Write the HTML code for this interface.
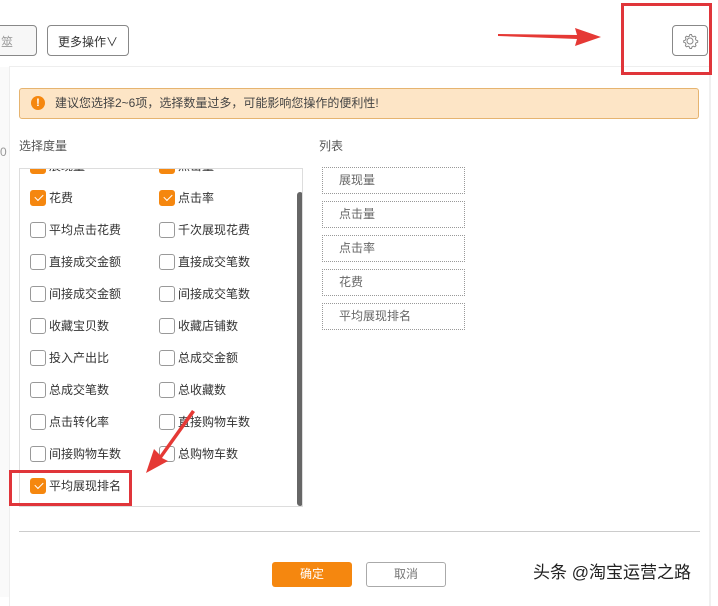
<!DOCTYPE html>
<html><head><meta charset="utf-8"><style>
*{box-sizing:border-box;margin:0;padding:0}
body{width:718px;height:594px;background:#fff;position:relative;overflow:hidden;font-family:"Liberation Sans","Noto Sans CJK SC",sans-serif;font-size:12px;color:#333}
.a{position:absolute}
.btn{position:absolute;border:1px solid #888;border-radius:4px;background:#fff}
.cb{position:absolute;width:16px;height:16px;border:1px solid #999;border-radius:3px;background:#fff}
.cb.on{background:#f5870f;border-color:#f5870f}
.cb.on::after{content:"";position:absolute;left:4px;top:3px;width:7px;height:4px;border:solid #fff;border-width:0 0 1.5px 1.5px;transform:rotate(-45deg)}
.lb{position:absolute;font-size:12px;line-height:16px;color:#333}
.li{position:absolute;left:322px;width:143px;height:27px;border:1px dotted #999;color:#666;padding-left:16px;line-height:25px}
</style></head><body>
<div class="a" style="left:0;top:67px;width:9px;height:530px;background:#fafafa"></div>
<div class="btn" style="left:-4px;top:25px;width:41px;height:31px;background:#f7f7f7"><span style="position:absolute;left:4px;top:7px;color:#999">筮</span></div>
<div class="btn" style="left:47px;top:25px;width:82px;height:31px;padding:7px 0 0 10px;font-size:12px">更多操作∨</div>
<div class="btn" style="left:672px;top:25px;width:36px;height:31px">
<svg width="34" height="29" viewBox="0 0 34 29"><circle cx="17" cy="15" r="3" fill="none" stroke="#888" stroke-width="1"/><path d="M17 8.5l1.5 0 .5 1.6 1.3.7 1.6-.6 1.1 1.1-.6 1.6.7 1.3 1.6.5v1.6l-1.6.5-.7 1.3.6 1.6-1.1 1.1-1.6-.6-1.3.7-.5 1.6h-1.6l-.5-1.6-1.3-.7-1.6.6-1.1-1.1.6-1.6-.7-1.3-1.6-.5v-1.6l1.6-.5.7-1.3-.6-1.6 1.1-1.1 1.6.6 1.3-.7.5-1.6z" fill="none" stroke="#888" stroke-width="1"/></svg></div>
<svg class="a" style="left:495px;top:25px" width="110" height="22"><polygon points="3,9 82,10 80,3 106,12 80,21 82,14 3,11" fill="#e53935"/></svg>

<div class="a" style="left:9px;top:66px;width:702px;height:540px;background:#fff;border-left:1px solid #eee;border-top:1px solid #eee;border-right:2px solid #f0f0f0"></div>
<div class="a" style="left:621px;top:3px;width:91px;height:72px;border:3px solid #e0353a;z-index:5"></div>
<div class="a" style="left:19px;top:88px;width:680px;height:31px;background:#fde5c6;border:1px solid #e6b470;border-radius:3px"></div>
<div class="a" style="left:31px;top:96px;width:14px;height:14px;border-radius:50%;background:#f5870f;color:#fff;font-size:11px;font-weight:bold;text-align:center;line-height:14px">!</div>
<div class="a" style="left:55px;top:96px;color:#444;line-height:15px">建议您选择2~6项，选择数量过多，可能影响您操作的便利性!</div>
<div class="a" style="left:19px;top:137px;color:#555">选择度量</div>
<div class="a" style="left:319px;top:137px;color:#555">列表</div>
<div class="a" style="left:0;top:145px;color:#999">0</div>

<div class="a" style="left:19px;top:168px;width:284px;height:339px;border:1px solid #ddd;overflow:hidden">
<div class="a" style="left:277px;top:23px;width:6px;height:314px;background:#666;border-radius:3px"></div>
</div>
<div class="a" style="left:20px;top:169px;width:276px;height:336px;overflow:hidden">
<div class="cb on" style="left:10px;top:-11px"></div><div class="lb" style="left:29px;top:-11px">展现量</div>
<div class="cb on" style="left:139px;top:-11px"></div><div class="lb" style="left:158px;top:-11px">点击量</div>
</div>
<div class="cb on" style="left:30px;top:190px"></div><div class="lb" style="left:49px;top:190px">花费</div>
<div class="cb on" style="left:159px;top:190px"></div><div class="lb" style="left:178px;top:190px">点击率</div>
<div class="cb" style="left:30px;top:222px"></div><div class="lb" style="left:49px;top:222px">平均点击花费</div>
<div class="cb" style="left:159px;top:222px"></div><div class="lb" style="left:178px;top:222px">千次展现花费</div>
<div class="cb" style="left:30px;top:254px"></div><div class="lb" style="left:49px;top:254px">直接成交金额</div>
<div class="cb" style="left:159px;top:254px"></div><div class="lb" style="left:178px;top:254px">直接成交笔数</div>
<div class="cb" style="left:30px;top:286px"></div><div class="lb" style="left:49px;top:286px">间接成交金额</div>
<div class="cb" style="left:159px;top:286px"></div><div class="lb" style="left:178px;top:286px">间接成交笔数</div>
<div class="cb" style="left:30px;top:318px"></div><div class="lb" style="left:49px;top:318px">收藏宝贝数</div>
<div class="cb" style="left:159px;top:318px"></div><div class="lb" style="left:178px;top:318px">收藏店铺数</div>
<div class="cb" style="left:30px;top:350px"></div><div class="lb" style="left:49px;top:350px">投入产出比</div>
<div class="cb" style="left:159px;top:350px"></div><div class="lb" style="left:178px;top:350px">总成交金额</div>
<div class="cb" style="left:30px;top:382px"></div><div class="lb" style="left:49px;top:382px">总成交笔数</div>
<div class="cb" style="left:159px;top:382px"></div><div class="lb" style="left:178px;top:382px">总收藏数</div>
<div class="cb" style="left:30px;top:414px"></div><div class="lb" style="left:49px;top:414px">点击转化率</div>
<div class="cb" style="left:159px;top:414px"></div><div class="lb" style="left:178px;top:414px">直接购物车数</div>
<div class="cb" style="left:30px;top:446px"></div><div class="lb" style="left:49px;top:446px">间接购物车数</div>
<div class="cb" style="left:159px;top:446px"></div><div class="lb" style="left:178px;top:446px">总购物车数</div>
<div class="cb on" style="left:30px;top:478px"></div><div class="lb" style="left:49px;top:478px">平均展现排名</div>
<div class="a" style="left:9px;top:470px;width:123px;height:36px;border:3px solid #e0353a"></div>
<svg class="a" style="left:140px;top:405px" width="60" height="75"><polygon points="52,5 20,50 14,44 6,68 28,56 22,53 55,7" fill="#e53935"/></svg>

<div class="li" style="top:167px">展现量</div>
<div class="li" style="top:201px">点击量</div>
<div class="li" style="top:235px">点击率</div>
<div class="li" style="top:269px">花费</div>
<div class="li" style="top:303px">平均展现排名</div>

<div class="a" style="left:19px;top:531px;width:681px;height:1px;background:#ccc"></div>
<div class="a" style="left:272px;top:562px;width:80px;height:25px;background:#f5870f;border-radius:3px;color:#fff;text-align:center;line-height:25px">确定</div>
<div class="a" style="left:366px;top:562px;width:80px;height:25px;border:1px solid #aaa;border-radius:3px;color:#777;text-align:center;line-height:23px">取消</div>
<div class="a" style="left:533px;top:558px;font-size:17px;color:#222">头条 @淘宝运营之路</div>
</body></html>
